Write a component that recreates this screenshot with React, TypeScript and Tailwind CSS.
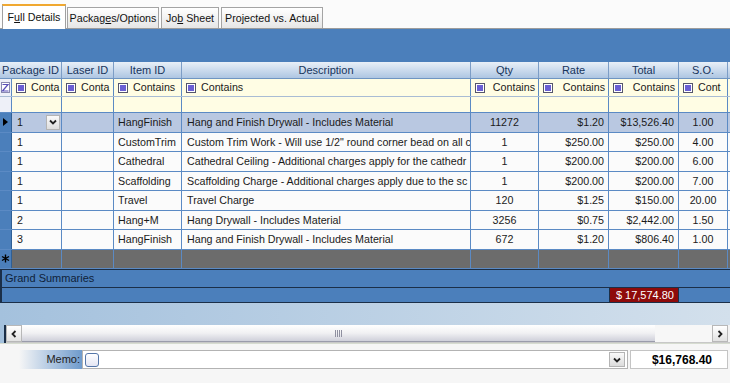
import React from 'react';

const W = ['w-[12px]', 'w-[50px]', 'w-[52px]', 'w-[68px]', 'w-[289px]', 'w-[68px]', 'w-[70px]', 'w-[70px]', 'w-[49px]', 'w-[42px]'];

interface LineItem {
  pk: string;
  item: string;
  desc: string;
  qty: string;
  rate: string;
  total: string;
  so: string;
  selected?: boolean;
}

const rows: LineItem[] = [
  { pk: '1', item: 'HangFinish', desc: 'Hang and Finish Drywall - Includes Material', qty: '11272', rate: '$1.20', total: '$13,526.40', so: '1.00', selected: true },
  { pk: '1', item: 'CustomTrim', desc: 'Custom Trim Work - Will use 1/2" round corner bead on all c', qty: '1', rate: '$250.00', total: '$250.00', so: '4.00' },
  { pk: '1', item: 'Cathedral', desc: 'Cathedral Ceiling - Additional charges apply for the cathedr', qty: '1', rate: '$200.00', total: '$200.00', so: '6.00' },
  { pk: '1', item: 'Scaffolding', desc: 'Scaffolding Charge - Additional charges apply due to the sc', qty: '1', rate: '$200.00', total: '$200.00', so: '7.00' },
  { pk: '1', item: 'Travel', desc: 'Travel Charge', qty: '120', rate: '$1.25', total: '$150.00', so: '20.00' },
  { pk: '2', item: 'Hang+M', desc: 'Hang Drywall - Includes Material', qty: '3256', rate: '$0.75', total: '$2,442.00', so: '1.50' },
  { pk: '3', item: 'HangFinish', desc: 'Hang and Finish Drywall - Includes Material', qty: '672', rate: '$1.20', total: '$806.40', so: '1.00' },
];

// filter captions as they show in the narrow columns
const filters = ['Conta', 'Conta', 'Contains', 'Contains', 'Contains', 'Contains', 'Contains', 'Cont', ''];

function FilterIcon() {
  return (
    <span className="inline-flex w-[10px] h-[10px] shrink-0 items-center justify-center border border-[#55556b] bg-white">
      <span className="block w-[6px] h-[6px] bg-[#6b5fd3]" />
    </span>
  );
}

function Chevron({ dir }: { dir: 'down' | 'left' | 'right' }) {
  const d = dir === 'down' ? 'M2 3.5 L5 6.5 L8 3.5' : dir === 'left' ? 'M6.5 2 L3.5 5 L6.5 8' : 'M3.5 2 L6.5 5 L3.5 8';
  return (
    <svg width="10" height="10" viewBox="0 0 10 10">
      <path d={d} fill="none" stroke="#222" strokeWidth="1.8" />
    </svg>
  );
}

function Tab({ label, u, w, active }: { label: string; u: number; w: string; active?: boolean }) {
  const parts = [label.slice(0, u), label.slice(u, u + 1), label.slice(u + 1)];
  return (
    <div
      className={
        active
          ? `${w} h-[25px] mr-[1px] flex items-center justify-center bg-white border border-b-0 border-[#a0a0a0] border-t-2 border-t-[#f0a830] -mb-[1px] text-[#111]`
          : `${w} h-[21px] mr-[2px] flex items-center justify-center bg-gradient-to-b from-white to-[#e6e6e6] border border-b-0 border-[#a4a4a4] text-[#111]`
      }
    >
      <span className="whitespace-nowrap">
        {parts[0]}
        <span className="underline">{parts[1]}</span>
        {parts[2]}
      </span>
    </div>
  );
}

const headers = ['Laser ID', 'Item ID', 'Description', 'Qty', 'Rate', 'Total', 'S.O.', ''];

export default function App() {
  return (
    <div className="w-[730px] h-[383px] overflow-hidden bg-white font-['Liberation_Sans',Arial,sans-serif] text-[10.7px] text-[#1a1a1a] flex flex-col">
      {/* Tabs */}
      <div className="h-[29px] shrink-0 flex items-end pl-[2px] border-b border-[#9c9c9c] bg-[#fbfbfb] text-[10.7px]">
        <Tab label="Full Details" u={1} w="w-[64px]" active />
        <Tab label="Packages/Options" u={6} w="w-[92px]" />
        <Tab label="Job Sheet" u={2} w="w-[58px]" />
        <Tab label="Projected vs. Actual" u={3} w="w-[102px]" />
      </div>

      {/* Group band */}
      <div className="h-[33px] shrink-0 bg-[#4b7fbb]" />

      {/* Grid */}
      <div className="w-[770px] flex flex-col">
        {/* Header */}
        <div className="h-[17px] flex bg-gradient-to-b from-[#e9f0f8] to-[#aec6e2] border-b border-[#6f95c2] text-[#17345c] text-[11px]">
          <div className="w-[62px] border-r border-[#7c9dc6] flex items-center justify-center">Package ID</div>
          {headers.map((h, i) => (
            <div key={i} className={`${W[i + 2]} border-r border-[#7c9dc6] flex items-center justify-center`}>
              {h}
            </div>
          ))}
        </div>

        {/* Filter row */}
        <div className="h-[18px] flex bg-[#fffde4] border-b border-[#a9bcd4]">
          <div className={`${W[0]} border-r border-[#5b8ac4] bg-[#eef0f8] flex items-center justify-center`}>
            <svg width="9" height="11" viewBox="0 0 9 11">
              <rect x="0.5" y="0.5" width="8" height="10" fill="#fff" stroke="#8a8ab0" />
              <path d="M1.5 2.5 H7 L1.5 9 H7.5" fill="none" stroke="#5a4fb8" strokeWidth="1.2" />
            </svg>
          </div>
          {filters.map((t, i) => {
            const right = i >= 4 && i <= 6;
            return (
              <div key={i} className={`${W[i + 1]} border-r border-[#5b8ac4] flex items-center gap-[5px] pl-[4px] pr-[3px] overflow-hidden whitespace-nowrap`}>
                <FilterIcon />
                {t && <span className={right ? 'flex-1 text-right' : ''}>{t}</span>}
              </div>
            );
          })}
        </div>

        {/* Empty yellow row */}
        <div className="h-[16px] flex bg-[#fffde4] border-b border-[#5b8ac4]">
          <div className={`${W[0]} border-r border-[#5b8ac4] bg-[#eef0f8]`} />
          {W.slice(1).map((w, i) => (
            <div key={i} className={`${w} border-r border-[#5b8ac4]`} />
          ))}
        </div>

        {/* Data rows */}
        {rows.map((r, idx) => (
          <div key={idx} className={`h-[19.5px] flex border-b border-[#5b8ac4] ${r.selected ? 'bg-[#b9c8e1]' : 'bg-[#fbfbfb]'}`}>
            <div className={`${W[0]} border-r border-[#2f5f95] bg-[#4b7fbb] flex items-center justify-center`}>
              {r.selected && (
                <svg width="5" height="8" viewBox="0 0 5 8">
                  <path d="M0 0 L5 4 L0 8 Z" fill="#000" />
                </svg>
              )}
            </div>
            <div className={`${W[1]} border-r border-[#5b8ac4] flex items-center pl-[5px] pr-[1px]`}>
              <span className="flex-1">{r.pk}</span>
              {r.selected && (
                <span className="w-[14px] h-[15px] flex items-center justify-center border border-[#b4b4b4] bg-gradient-to-b from-[#fafafa] to-[#dedede]">
                  <Chevron dir="down" />
                </span>
              )}
            </div>
            <div className={`${W[2]} border-r border-[#5b8ac4]`} />
            <div className={`${W[3]} border-r border-[#5b8ac4] flex items-center pl-[4px] overflow-hidden whitespace-nowrap`}>{r.item}</div>
            <div className={`${W[4]} border-r border-[#5b8ac4] flex items-center pl-[5px] overflow-hidden whitespace-nowrap`}>{r.desc}</div>
            <div className={`${W[5]} border-r border-[#5b8ac4] flex items-center justify-center`}>{r.qty}</div>
            <div className={`${W[6]} border-r border-[#5b8ac4] flex items-center justify-end pr-[4px]`}>{r.rate}</div>
            <div className={`${W[7]} border-r border-[#5b8ac4] flex items-center justify-end pr-[4px]`}>{r.total}</div>
            <div className={`${W[8]} border-r border-[#5b8ac4] flex items-center justify-center`}>{r.so}</div>
            <div className={`${W[9]} border-r border-[#5b8ac4]`} />
          </div>
        ))}

        {/* New row */}
        <div className="h-[19.5px] flex bg-[#6c6c6c] border-b border-[#5b8ac4]">
          <div className={`${W[0]} border-r border-[#2f5f95] bg-[#4b7fbb] flex items-center justify-center`}>
            <svg width="9" height="9" viewBox="0 0 9 9">
              <path d="M4.5 0.5 V8.5 M1 2.5 L8 6.5 M8 2.5 L1 6.5" stroke="#000" strokeWidth="1.4" />
            </svg>
          </div>
          {W.slice(1).map((w, i) => (
            <div key={i} className={`${w} border-r border-[#5b8ac4]`} />
          ))}
        </div>

        {/* Grand summaries */}
        <div className="h-[18px] flex items-center bg-[#4b7fbb] border-t border-[#1b2f48] border-l-2 border-l-[#1b2f48] pl-[3px] text-[#0f2239] text-[11px]">
          Grand Summaries
        </div>
        <div className="h-[16px] flex bg-[#4b7fbb] border-t border-b border-[#1b2f48] border-l-2 border-l-[#1b2f48]">
          <div className="w-[607px]" />
          <div className="w-[70px] bg-[#8e0a0a] border-x border-[#1b2f48] flex items-center justify-end pr-[4px] text-white text-[11px]">$ 17,574.80</div>
        </div>
      </div>

      {/* Gradient filler */}
      <div className="h-[22px] shrink-0 bg-gradient-to-r from-[#a4c1dd] to-[#d3e0ec]" />

      {/* Horizontal scrollbar */}
      <div className="h-[18px] shrink-0 flex items-stretch bg-gradient-to-r from-[#a4c1dd] to-[#d3e0ec]">
        <div className="w-[6px] border-r-2 border-[#1b2f48]" />
        <div className="flex-1 flex bg-[#f3f3f3] border-b border-[#c8c8c8]">
          <div className="w-[16px] flex items-center justify-center bg-gradient-to-b from-white to-[#e2e2e2] border border-[#b8b8b8]">
            <Chevron dir="left" />
          </div>
          <div className="w-[633px] flex items-center justify-center bg-gradient-to-b from-white via-[#f1f1f3] to-[#cfd0da] border-b border-[#9a9cab]">
            <svg width="8" height="7" viewBox="0 0 8 7">
              <path d="M0.5 0 V7 M2.5 0 V7 M4.5 0 V7 M6.5 0 V7" stroke="#8f90a0" strokeWidth="1" />
            </svg>
          </div>
          <div className="flex-1 bg-[#f7f7f7]" />
          <div className="w-[16px] flex items-center justify-center bg-gradient-to-b from-white to-[#e2e2e2] border border-[#b8b8b8]">
            <Chevron dir="right" />
          </div>
          <div className="w-[2px]" />
        </div>
      </div>

      {/* Bottom memo bar */}
      <div className="flex-1 bg-[#f6f6f6] border-t border-[#d6dcd0] flex items-start pt-[6px] pl-[19px] text-[11px]">
        <div className="w-[63px] h-[19px] bg-gradient-to-r from-[#f6f6f6] to-[#6f9bcc] flex items-center justify-end pr-[2px] text-[#222]">Memo:</div>
        <div className="w-[546px] h-[19px] bg-white border border-[#b3b3b3] flex items-center pl-[2px] pr-[2px]">
          <span className="w-[14px] h-[14px] rounded-[3px] border border-[#5576a8] bg-gradient-to-b from-white to-[#e4e6f4]" />
          <span className="flex-1" />
          <span className="w-[16px] h-[15px] flex items-center justify-center border border-[#b4b4b4] bg-gradient-to-b from-[#fafafa] to-[#dcdcdc]">
            <Chevron dir="down" />
          </span>
        </div>
        <div className="ml-[2px] w-[98px] h-[19px] bg-white border border-[#c4c4c4] flex items-center justify-end pr-[15px] font-bold text-[12px] text-black">
          $16,768.40
        </div>
      </div>
    </div>
  );
}
